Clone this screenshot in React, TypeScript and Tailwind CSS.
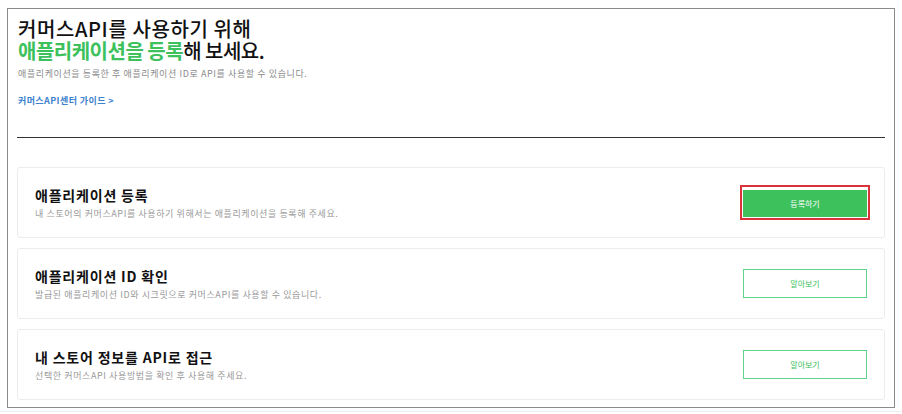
const cards = [
  {
    title: '애플리케이션 등록',
    desc: '내 스토어의 커머스API를 사용하기 위해서는 애플리케이션을 등록해 주세요.',
    button: '등록하기',
    primary: true,
  },
  {
    title: '애플리케이션 ID 확인',
    desc: '발급된 애플리케이션 ID와 시크릿으로 커머스API를 사용할 수 있습니다.',
    button: '알아보기',
    primary: false,
  },
  {
    title: '내 스토어 정보를 API로 접근',
    desc: '선택한 커머스API 사용방법을 확인 후 사용해 주세요.',
    button: '알아보기',
    primary: false,
  },
];

export default function App() {
  return (
    <div
      className="w-[902px] h-[414px] bg-white pt-[8px] pl-[7px]"
      style={{ fontFamily: '"Noto Sans CJK KR", "Noto Sans", sans-serif' }}
    >
      <div className="w-[888px] h-[400px] border border-[#8a8a8a] px-[9px]">
        <div className="pl-[1px] pt-[9px] pb-[30px] border-b border-[#333]">
          <h1 className="text-[20px] leading-[22px] font-medium text-[#111]">
            <div className="tracking-[0.6px]">커머스API를 사용하기 위해</div>
            <div className="tracking-[-0.5px]">
              <span className="text-[#3cc15c] font-bold">애플리케이션을 등록</span>해 보세요.
            </div>
          </h1>
          <p className="mt-[6px] text-[9px] leading-[12px] text-[#8a8a8a] tracking-[0.6px]">
            애플리케이션을 등록한 후 애플리케이션 ID로 API를 사용할 수 있습니다.
          </p>
          <a className="block mt-[15px] text-[9px] leading-[12px] font-bold text-[#3d82cf] tracking-[0.4px]">
            커머스API센터 가이드 &gt;
          </a>
        </div>
        <div className="mt-[29px] flex flex-col gap-[10px]">
          {cards.map((c) => (
            <div
              key={c.title}
              className="h-[71px] border border-[#ececec] rounded-[3px] flex items-center justify-between pl-[17px] pr-[17px]"
            >
              <div className="pt-[1px]">
                <div className="text-[14px] leading-[18px] font-bold text-[#111] tracking-[0.8px]">{c.title}</div>
                <div className="mt-[4px] text-[9px] leading-[12px] text-[#999] tracking-[0.6px]">{c.desc}</div>
              </div>
              {c.primary ? (
                <div className="p-[1px] border-2 border-[#d9323a] -mr-[3px]">
                  <button className="w-[124px] h-[27px] bg-[#3cc15c] text-white text-[8px]">
                    {c.button}
                  </button>
                </div>
              ) : (
                <button className="w-[124px] h-[29px] border border-[#5fd48a] text-[#3cc15c] text-[8px]">
                  {c.button}
                </button>
              )}
            </div>
          ))}
        </div>
      </div>
      <div className="mt-[3px] -ml-[7px] w-[902px] border-t border-[#eeeeee]" />
    </div>
  );
}
